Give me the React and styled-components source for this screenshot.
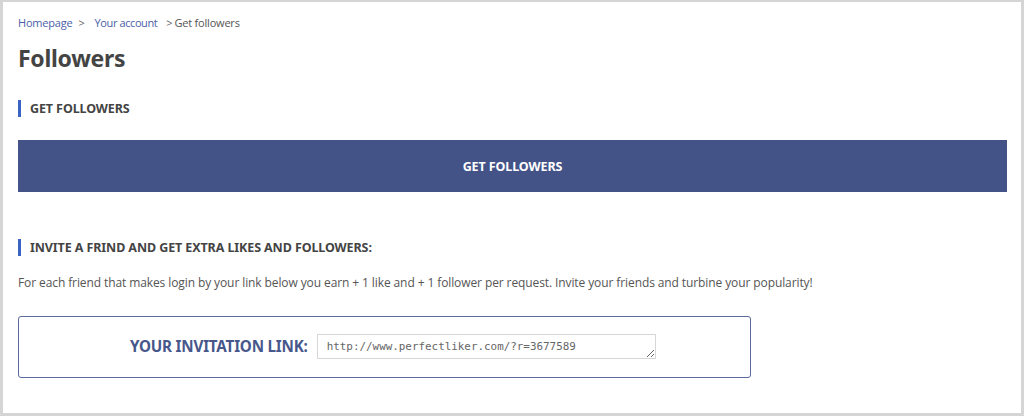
import React from 'react';
import styled, { createGlobalStyle } from 'styled-components';

const GlobalStyle = createGlobalStyle`
    html, body {
        margin: 0;
        padding: 0;
        background: #d5d5d5;
    }
    * { box-sizing: border-box; }
`;

const Frame = styled.div`
    margin: 2px 3px 0 3px;
    height: 411px;
    background: #fff;
    padding: 12px 14px 0 15px;
    font-family: "Open Sans", "Liberation Sans", sans-serif;
`;

const Breadcrumb = styled.div`
    display: flex;
    align-items: center;
    font-size: 11px;
    height: 16px;
    color: #555;
    letter-spacing: -0.2px;
`;

const Crumb = styled.a`
    color: #4b5ea8;
    text-decoration: none;
    letter-spacing: ${p => p.$tight ? '-0.4px' : '-0.2px'};
`;

const Sep = styled.span`
    margin: 0 ${p => p.$after}px 0 ${p => p.$before}px;
    color: #666;
`;

const Title = styled.h1`
    margin: 13px 0 0;
    font-family: "Noto Sans", sans-serif;
    font-size: 23px;
    font-weight: 700;
    line-height: 30px;
    color: #444;
    letter-spacing: -0.3px;
`;

const SectionHeader = styled.h2`
    margin: ${p => p.$top}px 0 0;
    border-left: 3px solid #3b63c4;
    padding-left: 9px;
    height: 17px;
    line-height: 17px;
    font-family: "Noto Sans", sans-serif;
    font-size: 12.5px;
    font-weight: 700;
    color: #444;
    letter-spacing: -0.1px;
`;

const BigButton = styled.button`
    display: block;
    width: 989px;
    height: 52px;
    margin-top: 23px;
    background: #445387;
    border: none;
    color: #fff;
    font-family: "Noto Sans", sans-serif;
    font-size: 12.5px;
    font-weight: 700;
    letter-spacing: -0.1px;
`;

const Text = styled.p`
    margin: 18px 0 0;
    font-size: 12px;
    line-height: 17px;
    color: #555;
    letter-spacing: -0.1px;
`;

const InviteBox = styled.div`
    width: 733px;
    height: 62px;
    margin-top: 25px;
    border: 1px solid #5b6a9c;
    border-radius: 3px;
    display: flex;
    align-items: center;
    padding-left: 111px;
    gap: 9px;
`;

const Label = styled.span`
    font-family: "Noto Sans", sans-serif;
    font-size: 15.2px;
    font-weight: 700;
    line-height: 20px;
    margin-top: -3px;
    color: #47578b;
    letter-spacing: -0.2px;
`;

const LinkField = styled.textarea`
    width: 339px;
    height: 25px;
    margin-top: -2px;
    border: 1px solid #d6d6d6;
    padding: 4px 9px;
    font-family: "DejaVu Sans Mono", "Liberation Mono", monospace;
    font-size: 10.9px;
    line-height: 15px;
    color: #666;
    resize: both;
    overflow: hidden;
`;

export default function App() {
    return (
        <>
            <GlobalStyle />
            <Frame>
                <Breadcrumb>
                    <Crumb href="#">Homepage</Crumb>
                    <Sep $before={6} $after={10}>&gt;</Sep>
                    <Crumb href="#" $tight>Your account</Crumb>
                    <Sep $before={9} $after={2}>&gt;</Sep>
                    <span>Get followers</span>
                </Breadcrumb>
                <Title>Followers</Title>
                <SectionHeader $top={27}>GET FOLLOWERS</SectionHeader>
                <BigButton>GET FOLLOWERS</BigButton>
                <SectionHeader $top={47}>INVITE A FRIND AND GET EXTRA LIKES AND FOLLOWERS:</SectionHeader>
                <Text>For each friend that makes login by your link below you earn + 1 like and + 1 follower per request. Invite your friends and turbine your popularity!</Text>
                <InviteBox>
                    <Label>YOUR INVITATION LINK:</Label>
                    <LinkField readOnly value="http://www.perfectliker.com/?r=3677589" />
                </InviteBox>
            </Frame>
        </>
    );
}
